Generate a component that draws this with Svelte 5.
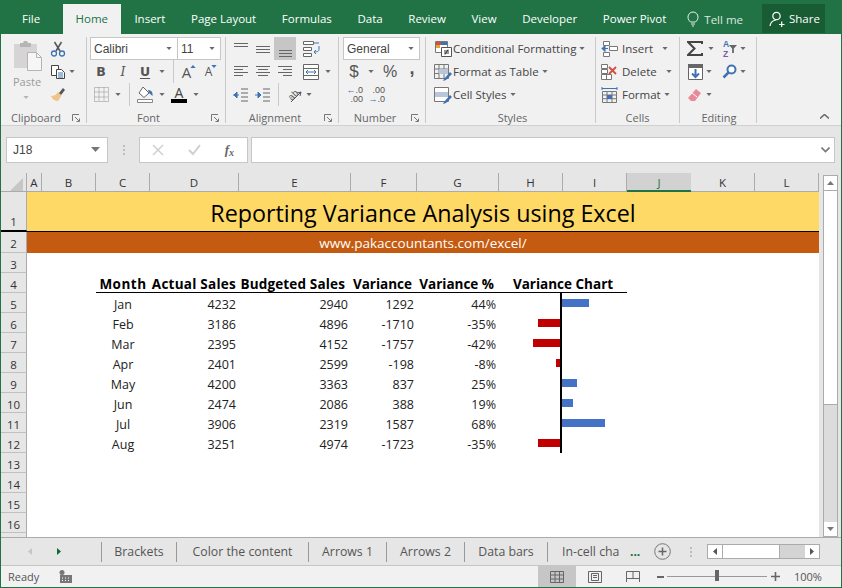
<script>
  const tabs = ['Insert', 'Page Layout', 'Formulas', 'Data', 'Review', 'View', 'Developer', 'Power Pivot'];
  const cols = ['A','B','C','D','E','F','G','H','I','J','K','L'];
  const data = [
    ['Jan','4232','2940','1292','44%',27],
    ['Feb','3186','4896','-1710','-35%',-22],
    ['Mar','2395','4152','-1757','-42%',-27],
    ['Apr','2401','2599','-198','-8%',-4],
    ['May','4200','3363','837','25%',15],
    ['Jun','2474','2086','388','19%',11],
    ['Jul','3906','2319','1587','68%',43],
    ['Aug','3251','4974','-1723','-35%',-22]
  ];
  const emptyAfter = [13,14,15,16];
  const sheetTabs = [['Brackets',75],['Color the content',132],['Arrows 1',78],['Arrows 2',78],['Data bars',83]];
</script>

{#snippet caret()}
  <svg class="caret" width="6" height="3" viewBox="0 0 7 4"><path d="M0 0h7L3.5 4z" fill="#6a6a6a"/></svg>
{/snippet}
{#snippet launcher()}
  <svg class="launch" width="8" height="8" viewBox="0 0 8 8"><path d="M.5 7V.5H7M3 3l4 4M4.5 7.5h3v-3" fill="none" stroke="#777"/></svg>
{/snippet}
{#snippet lines(ys)}
  <svg width="16" height="16" viewBox="0 0 16 16">
    {#each ys as l}<path d="M{l[0]} {l[2]}.5H{l[1]}" stroke="#666"/>{/each}
  </svg>
{/snippet}
{#snippet tableIcon(fill)}
  <svg width="20" height="18" viewBox="0 0 20 18">
    <path d="M1.5 1.5h14v14h-14zM1.5 6h14M1.5 10.500h14M6 1.500v14M11 1.500v14" fill="none" stroke="#777"/>
    <path d="M6 6h{fill}v5H6z" fill="#b9c6da"/>
    <path d="M11 16l6-7 2 2-6 6-3 1z" fill="#3f72b5"/>
  </svg>
{/snippet}

<div class="win">
  <header class="tabbar">
    <span class="tab file">File</span>
    <span class="tab home">Home</span>
    {#each tabs as t}<span class="tab">{t}</span>{/each}
    <span class="tell">
      <svg width="12" height="16" viewBox="0 0 12 16"><path d="M3.500 11C2 9.500 1 8.500 1 6a5 5 0 0 1 10 0c0 2.500-1 3.500-2.500 5zM4 13h4M5 15h2" fill="none" stroke="#e8f0ea" stroke-width="1"/></svg>
      Tell me
    </span>
    <span class="share">
      <svg width="16" height="16" viewBox="0 0 16 16"><circle cx="7.500" cy="5" r="3.700" fill="none" stroke="#fff" stroke-width="1.200"/><path d="M1 15c.5-3.500 2.500-5.500 6-6M10 13.500h5.500M12.700 10.500v6" fill="none" stroke="#fff" stroke-width="1.200"/></svg>
      Share
    </span>
  </header>

  <section class="ribbon">
    <div class="group g-clip">
      <div class="gbody clip">
        <div class="paste">
          <svg width="29" height="30" viewBox="0 0 29 30"><path d="M1 4a1 1 0 0 1 1-1h21a1 1 0 0 1 1 1v22a1 1 0 0 1-1 1H2a1 1 0 0 1-1-1z" fill="#d6d4d4"/><path d="M7 2h3l1-2h3l1 2h3v4H7z" fill="#b6b4b4"/><path d="M14.500 11.500h9l5 5v13h-14z" fill="#f6f6f6" stroke="#b5b3b3"/><path d="M23.500 11.500v5h5" fill="none" stroke="#b5b3b3"/></svg>
          <span class="pastelbl">Paste</span>
          <svg class="caret" width="6" height="3" viewBox="0 0 7 4"><path d="M0 0h7L3.500 4z" fill="#b5b5b5"/></svg>
        </div>
        <div class="clipcol">
          <div class="row"><span class="ib"><svg width="16" height="16" viewBox="0 0 16 16"><path d="M4.500 1l5.500 9M11.500 1L6 10" stroke="#555" stroke-width="1.500" fill="none"/><circle cx="4" cy="12.500" r="2.500" fill="none" stroke="#3f72b5" stroke-width="1.300"/><circle cx="12" cy="12.500" r="2.500" fill="none" stroke="#3f72b5" stroke-width="1.300"/></svg></span></div>
          <div class="row"><span class="ib"><svg width="16" height="16" viewBox="0 0 16 16"><path d="M1.500 1.500h7v10h-7z" fill="#fff" stroke="#444"/><path d="M6.500 5.500h5l3 3v6h-8z" fill="#fff" stroke="#444"/><path d="M8 9h5M8 11h5M8 13h5" stroke="#3f72b5"/></svg></span>{@render caret()}</div>
          <div class="row"><span class="ib"><svg width="16" height="16" viewBox="0 0 16 16"><path d="M8 5l3.500 3.500L8 14c-3 0-6-2-7-5 3 0 5-1 7-4z" fill="#eec488"/><path d="M9 6l4-5 2 2-4 5z" fill="#555"/></svg></span></div>
        </div>
      </div>
      <div class="glabel">Clipboard{@render launcher()}</div>
    </div>

    <div class="group g-font">
      <div class="gbody stack">
        <div class="row">
          <div class="combo fontname"><span>Calibri</span>{@render caret()}</div>
          <div class="combo fontsize"><span>11</span>{@render caret()}</div>
        </div>
        <div class="row">
          <span class="ib letter bold">B</span><span class="ib letter ital">I</span><span class="ib letter und">U</span><span class="cb">{@render caret()}</span>
          <i class="vsep"></i>
          <span class="ib growA big">A<svg width="6" height="3" viewBox="0 0 7 4"><path d="M0 4h7L3.500 0z" fill="#3f72b5"/></svg></span>
          <span class="ib growA small">A<svg width="6" height="3" viewBox="0 0 7 4"><path d="M0 0h7L3.500 4z" fill="#3f72b5"/></svg></span>
        </div>
        <div class="row">
          <span class="ib"><svg width="15" height="15" viewBox="0 0 15 15"><path d="M.5 .5h14v14H.5zM.5 5h14M.5 10h14M5 .5v14M10 .5v14" fill="none" stroke="#8f8f8f" stroke-dasharray="1 1"/></svg></span><span class="cb">{@render caret()}</span>
          <i class="vsep s2"></i>
          <span class="ib"><svg width="17" height="17" viewBox="0 0 17 17"><path d="M6 1l6 6-5 4.500L2 7z" fill="#fff" stroke="#666"/><path d="M11 4c3 0 5 2 4.500 6L12 7z" fill="#3f72b5"/><path d="M.5 13.500h15v3H.5z" fill="#fff" stroke="#888"/></svg></span><span class="cb">{@render caret()}</span>
          <span class="ib fontcolor">A<i></i></span><span class="cb">{@render caret()}</span>
        </div>
      </div>
      <div class="glabel">Font{@render launcher()}</div>
    </div>

    <div class="group g-align">
      <div class="gbody stack">
        <div class="row">
          <span class="ib">{@render lines([[1,15,2],[1,15,5]])}</span>
          <span class="ib">{@render lines([[1,15,5],[1,15,8],[1,15,11]])}</span>
          <span class="ib on">{@render lines([[2,15,9],[2,15,12],[2,15,15]])}</span>
          <span class="ib wrapb"><svg width="17" height="16" viewBox="0 0 17 16"><path d="M.5 .5h10v3H.5zM.5 6.500h8v3H.5zM.5 12.500h8v3H.5z" fill="#fff" stroke="#666"/><path d="M11 2h5M16 8c0 2-1 3-5 3M13 9l-2 2 2 2M16 5v3" fill="none" stroke="#3f72b5"/></svg></span>
        </div>
        <div class="row">
          <span class="ib">{@render lines([[1,15,2],[1,10,5],[1,15,8],[1,10,11]])}</span>
          <span class="ib">{@render lines([[1,15,2],[3,13,5],[1,15,8],[3,13,11]])}</span>
          <span class="ib">{@render lines([[1,15,2],[6,15,5],[1,15,8],[6,15,11]])}</span>
          <span class="ib wrapb"><svg width="16" height="16" viewBox="0 0 16 16"><path d="M.5 .5h15v15H.5zM.5 4.500h15M.5 11.500h15" fill="#fff" stroke="#666"/><path d="M3 8h10M3 8l2-2M3 8l2 2M13 8l-2-2M13 8l-2 2" stroke="#3f72b5" fill="none"/></svg></span><span class="cb">{@render caret()}</span>
        </div>
        <div class="row">
          <span class="ib"><svg width="16" height="16" viewBox="0 0 16 16"><path d="M8 2h7M8 6h7M8 10h7M8 14h7" stroke="#666"/><path d="M0 8h6M1 8l3-3v6z" stroke="#3f72b5" fill="#3f72b5"/></svg></span>
          <span class="ib"><svg width="16" height="16" viewBox="0 0 16 16"><path d="M8 2h7M8 6h7M8 10h7M8 14h7" stroke="#666"/><path d="M0 8h6M6 8L3 5v6z" stroke="#3f72b5" fill="#3f72b5"/></svg></span>
          <i class="vsep s3"></i>
          <span class="ib"><svg class="orient" width="18" height="18" viewBox="0 0 18 18"><text x="3" y="12" font-size="9" fill="#555" transform="rotate(-45 8 9)" font-family="Liberation Sans">ab</text><path d="M6 16L16 6M16 6l-4 1M16 6l-1 4" stroke="#555" fill="none"/></svg></span><span class="cb tight">{@render caret()}</span>
        </div>
      </div>
      <div class="glabel">Alignment{@render launcher()}</div>
    </div>

    <div class="group g-num">
      <div class="gbody stack">
        <div class="row"><div class="combo general"><span>General</span>{@render caret()}</div></div>
        <div class="row">
          <span class="ib numsym dollar">$</span><span class="cb">{@render caret()}</span>
          <span class="ib numsym pct">%</span><span class="ib numsym comma">,</span>
        </div>
        <div class="row">
          <span class="ib dec"><span><b>←</b>.0</span><span>.00</span></span>
          <span class="ib dec"><span>.00</span><span><b>→</b>.0</span></span>
        </div>
      </div>
      <div class="glabel">Number{@render launcher()}</div>
    </div>

    <div class="group g-styles">
      <div class="gbody stack">
        <div class="line"><span class="lic"><svg width="17" height="16" viewBox="0 0 17 16"><path d="M.5 .5h12v11H.5z" fill="#fff" stroke="#777"/><path d="M1 1h5v3H1z" fill="#d14f3f"/><path d="M6 1h6v3H6z" fill="#3f72b5"/><path d="M1 4h4v3H1z" fill="#e8a13c"/><path d="M6.500 6.500h10v9h-10z" fill="#fff" stroke="#555"/><path d="M9 10h5M9 12h5M13 8.500l-3 5" stroke="#333"/></svg></span>Conditional Formatting{@render caret()}</div>
        <div class="line"><span class="lic">{@render tableIcon(9)}</span>Format as Table{@render caret()}</div>
        <div class="line"><span class="lic"><svg width="20" height="18" viewBox="0 0 20 18"><path d="M1.500 1.500h14v14h-14z" fill="#fff" stroke="#777"/><path d="M2 6h13v5H2z" fill="#b9c6da"/><path d="M11 16l6-7 2 2-6 6-3 1z" fill="#3f72b5"/></svg></span>Cell Styles{@render caret()}</div>
      </div>
      <div class="glabel plain">Styles</div>
    </div>

    <div class="group g-cells">
      <div class="gbody stack">
        <div class="line c"><span class="lic"><svg width="17" height="16" viewBox="0 0 17 16"><path d="M2.500 .5h6v4h-6zM2.500 11.500h6v4h-6zM8.500 5.500h8v4h-8z" fill="#fff" stroke="#777"/><path d="M1 7.500h6M1 7.500l3-3v6z" stroke="#3f72b5" fill="#3f72b5"/></svg></span>Insert<span class="cgap g1">{@render caret()}</span></div>
        <div class="line c"><span class="lic"><svg width="17" height="16" viewBox="0 0 17 16"><path d="M.5 .5h6v4h-6zM.5 5.500h6v4h-6zM.5 10.500h10v5H.5zM5.500 10.500v5" fill="#fff" stroke="#777"/><path d="M8 3l7 7M15 3l-7 7" stroke="#d14f3f" stroke-width="1.800"/></svg></span>Delete<span class="cgap g2">{@render caret()}</span></div>
        <div class="line c"><span class="lic"><svg width="17" height="16" viewBox="0 0 17 16"><path d="M1.500 4.500h14v11h-14zM1.500 8h14M1.500 11.700h14M6 4.500v11M11 4.500v11" fill="none" stroke="#777"/><path d="M6 8h5v4H6z" fill="#3f72b5"/><path d="M1 1.500h15M1 0v3M16 0v3" stroke="#3f72b5"/></svg></span>Format<span class="cgap g3">{@render caret()}</span></div>
      </div>
      <div class="glabel plain">Cells</div>
    </div>

    <div class="group g-edit">
      <div class="gbody stack">
        <div class="line e">
          <span class="eic"><svg width="16" height="15" viewBox="0 0 16 15"><path d="M15 3V1H1l6.500 6.500L1 14h14v-2" fill="none" stroke="#444" stroke-width="2"/></svg></span>{@render caret()}
          <span class="eic e2"><span class="az"><b>A</b><em>Z</em></span><svg width="8" height="8" viewBox="0 0 9 9"><path d="M0 0h9L5.500 4v5h-2V4z" fill="#666"/></svg></span>{@render caret()}
        </div>
        <div class="line e">
          <span class="eic"><svg width="15" height="16" viewBox="0 0 15 16"><path d="M.5 .5h14v15H.5z" fill="#fff" stroke="#666"/><path d="M0 0h15v4H0z" fill="#666"/><path d="M7.500 5v8M4 9.500l3.500 3.500L11 9.500" fill="none" stroke="#3f72b5" stroke-width="2"/></svg></span><span class="e1c">{@render caret()}</span>
          <span class="eic e3"><svg width="15" height="15" viewBox="0 0 15 15"><circle cx="9.500" cy="5.500" r="4" fill="#fff" stroke="#3f72b5" stroke-width="2"/><path d="M6.500 8.500L1.500 13.500" stroke="#3f72b5" stroke-width="2.500"/></svg></span>{@render caret()}
        </div>
        <div class="line e">
          <span class="eic"><svg width="14" height="14" viewBox="0 0 14 14"><path d="M8 1l5 4-6 8H3l-3-3z" fill="#e88a9a"/><path d="M4 5l5 4" stroke="#fff"/></svg></span><span class="e1c">{@render caret()}</span>
        </div>
      </div>
      <div class="glabel plain">Editing</div>
    </div>
    <div class="collapse"><svg width="9" height="5" viewBox="0 0 9 5"><path d="M0 4.500L4.500 .5 9 4.500" fill="none" stroke="#666" stroke-width="1.500"/></svg></div>
  </section>

  <section class="fbar">
    <div class="namebox"><span>J18</span><svg width="9" height="5" viewBox="0 0 9 5"><path d="M0 0h9L4.500 5z" fill="#777"/></svg></div>
    <div class="fdots"><i></i><i></i><i></i></div>
    <div class="fxbox">
      <svg width="12" height="12" viewBox="0 0 12 12"><path d="M1 1l10 10M11 1L1 11" stroke="#cfcfcf" stroke-width="1.500"/></svg>
      <svg width="13" height="12" viewBox="0 0 13 12"><path d="M1 6l4 4 7-9" fill="none" stroke="#cfcfcf" stroke-width="2"/></svg>
      <span class="fx">f<sub>x</sub></span>
    </div>
    <div class="finput"><svg width="9" height="6" viewBox="0 0 9 6"><path d="M.5 .5L4.500 4.500 8.500 .5" fill="none" stroke="#777" stroke-width="1.600"/></svg></div>
  </section>

  <section class="work">
    <div class="sheet">
      <div class="hdr">
        <div class="corner"><svg width="13" height="13" viewBox="0 0 13 13"><path d="M13 0v13H0z" fill="#c6c6c6"/></svg></div>
        {#each cols as c}<div class="colh" class:sel={c === 'J'}>{c}</div>{/each}
      </div>

      <div class="gridrow r1"><div class="rowh">1</div><div class="title">Reporting Variance Analysis using Excel</div></div>
      <div class="gridrow r2"><div class="rowh">2</div><div class="url">www.pakaccountants.com/excel/</div></div>
      <div class="gridrow r"><div class="rowh">3</div></div>
      <div class="gridrow r">
        <div class="rowh">4</div>
        <div class="th ml c3 center">Month</div>
        <div class="th c4 pr3">Actual Sales</div>
        <div class="th c5 pr6">Budgeted Sales</div>
        <div class="th c6 pr5">Variance</div>
        <div class="th c7 pr5">Variance %</div>
        <div class="th c89 center">Variance Chart</div>
      </div>
      {#each data as d, i}
        <div class="gridrow r">
          <div class="rowh">{i + 5}</div>
          <div class="td ml c3 center">{d[0]}</div>
          <div class="td c4">{d[1]}</div>
          <div class="td c5">{d[2]}</div>
          <div class="td c6">{d[3]}</div>
          <div class="td c7">{d[4]}</div>
          <div class="chart c89">
            <div class="neg">{#if d[5] < 0}<i style="width:{-d[5]}px"></i>{/if}</div>
            <div class="axis"></div>
            <div class="pos">{#if d[5] > 0}<i style="width:{d[5]}px"></i>{/if}</div>
          </div>
        </div>
      {/each}
      {#each emptyAfter as n}<div class="gridrow r"><div class="rowh">{n}</div></div>{/each}
      <div class="gridrow stub"><div class="rowh"></div></div>
    </div>
    <div class="vscroll">
      <div class="vbtn"><svg width="7" height="4" viewBox="0 0 7 4"><path d="M0 4h7L3.500 0z" fill="#777"/></svg></div>
      <div class="vthumb"></div>
      <div class="vtrack"></div>
      <div class="vbtn last"><svg width="7" height="4" viewBox="0 0 7 4"><path d="M0 0h7L3.500 4z" fill="#777"/></svg></div>
    </div>
  </section>

  <section class="sheets">
    <div class="navs">
      <svg width="4" height="7" viewBox="0 0 4 7"><path d="M4 0v7L0 3.500z" fill="#c6c6c6"/></svg>
      <svg width="4" height="7" viewBox="0 0 4 7"><path d="M0 0v7L4 3.500z" fill="#0e6b35"/></svg>
    </div>
    {#each sheetTabs as t}<div class="stab" style="width:{t[1]}px">{t[0]}</div>{/each}
    <div class="stab last">In-cell cha</div>
    <span class="more">...</span>
    <svg class="plus" width="17" height="17" viewBox="0 0 17 17"><circle cx="8.500" cy="8.500" r="7.800" fill="none" stroke="#777"/><path d="M4.500 8.500h8M8.500 4.500v8" stroke="#666" stroke-width="1.500"/></svg>
    <div class="fdots h"><i></i><i></i><i></i></div>
    <div class="hscroll">
      <div class="hbtn"><svg width="4" height="7" viewBox="0 0 4 7"><path d="M4 0v7L0 3.500z" fill="#555"/></svg></div>
      <div class="hthumb"></div>
      <div class="htrack"></div>
      <div class="hbtn"><svg width="4" height="7" viewBox="0 0 4 7"><path d="M0 0v7L4 3.500z" fill="#555"/></svg></div>
    </div>
  </section>

  <footer class="status">
    <span class="ready">Ready</span>
    <svg class="macro" width="13" height="13" viewBox="0 0 13 13"><circle cx="3" cy="2.500" r="2.500" fill="#777"/><path d="M1 5h12v8H1z" fill="#777"/><path d="M3 8h1M6 8h1M9 8h1M3 10.500h1M6 10.500h1M9 10.500h1" stroke="#fff"/></svg>
    <div class="views">
      <span class="vw on"><svg width="14" height="12" viewBox="0 0 14 12"><path d="M.5 .5h13v11H.5zM.5 4h13M.5 8h13M5 .5v11M9.500 .5v11" fill="none" stroke="#666"/></svg></span>
      <span class="vw"><svg width="14" height="12" viewBox="0 0 14 12"><path d="M.5 .5h13v11H.5z" fill="none" stroke="#666"/><path d="M3.500 2.500h7v7h-7zM5 4.500h4M5 6.500h4" fill="none" stroke="#666"/></svg></span>
      <span class="vw"><svg width="14" height="12" viewBox="0 0 14 12"><path d="M.5 11V.5h13V11M.5 7.500h13M7 .5v7" fill="none" stroke="#666"/></svg></span>
    </div>
    <div class="zoom">
      <i class="zm"></i>
      <div class="zline"><i></i></div>
      <svg width="9" height="9" viewBox="0 0 9 9"><path d="M0 4.500h9M4.500 0v9" stroke="#666" stroke-width="1.600"/></svg>
    </div>
    <span class="pct100">100%</span>
  </footer>
</div>

<style>
  :global(body) { margin: 0; }
  .win {
    width: 842px; height: 588px; box-sizing: border-box;
    border: 1px solid #217346;
    background: #f1f1f1; display: flex; flex-direction: column; overflow: hidden;
    font-family: "Open Sans", sans-serif; font-size: 12px; color: #444;
  }
  svg { display: block; flex: none; }
  .orient { overflow: visible; }
  i { display: block; }

  .tabbar { height: 33px; background: #217346; color: #fff; display: flex; align-items: flex-end; flex: none; box-sizing: border-box; font-size: 11.5px; }
  .tab { height: 30px; line-height: 29px; margin-left: 25.600px; white-space: nowrap; }
  .file { margin-left: 21px; margin-right: -3px; }
  .home { background: #f1f1f1; color: #217346; width: 58px; text-align: center; margin-right: -12px; }
  .tell { display: flex; align-items: center; gap: 5px; height: 30px; margin-left: 21px; color: #dce9e1; white-space: nowrap; }
  .share { display: flex; align-items: center; gap: 4px; width: 63px; height: 29px; margin: 0 16px 1px auto; padding-left: 7px; box-sizing: border-box; background: #185c33; }

  .ribbon { height: 92px; flex: none; display: flex; align-items: flex-start; border-bottom: 1px solid #d0d0d0; position: relative; box-sizing: border-box; }
  .group { height: 86px; margin-top: 3px; border-right: 1px solid #c9c9c9; display: flex; flex-direction: column; box-sizing: border-box; }
  .gbody { height: 73px; flex: none; }
  .stack { display: flex; flex-direction: column; }
  .row { display: flex; align-items: center; height: 23px; }
  .glabel { position: relative; flex: 1; text-align: center; font-size: 11px; color: #666; line-height: 16px; padding-right: 18px; }
  .g-clip .glabel { padding-right: 15px; }
  .glabel.plain { padding-right: 3px; }
  .launch { position: absolute; right: 6px; top: 4px; }

  .g-clip { width: 86px; }
  .g-font { width: 139px; padding-left: 3px; }
  .g-align { width: 113px; padding-left: 4px; }
  .g-num { width: 87px; padding-left: 4px; }
  .g-styles { width: 170px; padding-left: 7px; }
  .g-cells { width: 84px; padding-left: 3px; }
  .g-edit { width: 77px; padding-left: 5px; }

  .clip { display: flex; }
  .paste { width: 46px; padding-left: 12px; box-sizing: border-box; display: flex; flex-direction: column; align-items: flex-start; padding-top: 4px; }
  .pastelbl { color: #9a9a9a; font-size: 11px; margin: 4px 0 0 0; line-height: 14px; }
  .paste .caret { margin: 7px 0 0 10px; }
  .clipcol { display: flex; flex-direction: column; }

  .ib { width: 22px; height: 23px; display: flex; align-items: center; justify-content: center; flex: none; box-sizing: border-box; }
  .ib.on { background: #c6c6c6; }
  .cb { width: 12px; display: flex; justify-content: center; flex: none; }
  .cb.tight { width: 8px; }
  .vsep { width: 1px; height: 23px; background: #c9c9c9; margin: 0 4px 0 5px; flex: none; }
  .vsep.s3 { margin: 0 4px; }
  .combo { height: 23px; background: #fff; border: 1px solid #c6c6c6; box-sizing: border-box; display: flex; align-items: center; justify-content: space-between; padding: 0 5px 0 3px; font-family: "Liberation Sans", sans-serif; font-size: 12px; color: #444; }
  .fontname { width: 88px; }
  .fontsize { width: 43px; border-left: 0; }
  .general { width: 77px; }
  .letter { font-family: "DejaVu Sans", sans-serif; font-size: 12.500px; color: #555; }
  .bold { font-weight: 700; }
  .ital { font-style: italic; font-family: "DejaVu Serif", serif; }
  .und { text-decoration: underline; text-underline-offset: 2px; font-weight: 700; }
  .growA { font-family: "Open Sans", sans-serif; color: #555; gap: 0; align-items: center; }
  .growA svg { margin: -10px 0 0 -1px; }
  .big { font-size: 15px; }
  .small { font-size: 12px; }
  .fontcolor { flex-direction: column; font-size: 14px; color: #444; line-height: 13px; }
  .fontcolor i { width: 16px; height: 4px; background: #000; }
  .wrapb { margin-left: 4px; }
  .numsym { font-family: "Liberation Sans", sans-serif; color: #555; }
  .dollar { font-size: 17px; }
  .pct { font-size: 16px; margin-left: 2px; }
  .comma { font-size: 18px; font-weight: 700; margin-top: -6px; }
  .dec { flex-direction: column; font-family: "Liberation Sans", sans-serif; font-size: 9px; line-height: 9px; color: #555; align-items: flex-end; padding-right: 2px; }
  .dec b { color: #3f72b5; font-weight: 700; }

  .line { height: 23px; display: flex; align-items: center; gap: 3px; font-size: 11.500px; white-space: nowrap; }
  .lic { width: 20px; display: flex; justify-content: center; flex: none; margin-right: -3px; }
  .line.c .lic { margin-right: 0; }
  .cgap { display: block; }
  .g1 { margin-left: 6px; }
  .g2 { margin-left: 6px; }
  .g3 { margin-left: 0; }
  .line.e { gap: 3px; }
  .eic { width: 20px; display: flex; justify-content: center; align-items: center; flex: none; }
  .e1c { display: block; margin-left: -2px; }
  .e2 { margin: 0 -2px 0 4px; width: 18px; }
  .e3 { margin: 0 -2px 0 4px; }
  .az { display: flex; flex-direction: column; font-size: 8.500px; line-height: 10px; font-family: "Liberation Sans", sans-serif; }
  .az b { color: #3f72b5; }
  .az em { color: #7e57a8; font-style: normal; font-weight: 700; }
  .collapse { position: absolute; right: 12px; bottom: 6px; }

  .fbar { height: 47px; flex: none; background: #e6e6e6; display: flex; align-items: center; box-sizing: border-box; padding: 0 6px 0 5px; }
  .namebox { width: 102px; height: 26px; background: #fff; border: 1px solid #c6c6c6; box-sizing: border-box; display: flex; align-items: center; justify-content: space-between; padding: 0 7px 0 6px; font-family: "Liberation Sans", sans-serif; font-size: 12px; }
  .fdots { width: 31px; display: flex; flex-direction: column; align-items: center; gap: 2px; flex: none; }
  .fdots i { width: 2px; height: 2px; background: #bdbdbd; }
  .fxbox { width: 109px; height: 26px; background: #fff; border: 1px solid #c6c6c6; box-sizing: border-box; display: flex; align-items: center; padding: 0 13px 0 12px; justify-content: space-between; }
  .fx { font-family: "Liberation Serif", serif; font-style: italic; font-weight: 700; font-size: 13px; color: #666; line-height: 12px; }
  .fx sub { font-size: 10px; vertical-align: -2px; line-height: 0; }
  .finput { flex: 1; height: 26px; margin-left: 3px; background: #fff; border: 1px solid #c6c6c6; box-sizing: border-box; display: flex; align-items: center; justify-content: flex-end; padding-right: 4px; }

  .work { height: 364px; flex: none; display: flex; background: #e6e6e6; }
  .sheet { width: 818px; flex: none; display: flex; flex-direction: column; font-family: "Open Sans", sans-serif; font-size: 12.500px; color: #111; }
  .hdr { height: 18px; flex: none; display: grid; grid-template-columns: 26px 15px 54px 54px 89px 112px 66px 82px 64px 64px 64px 64px 64px; border-bottom: 1px solid #ababab; box-sizing: content-box; background: #e6e6e6; }
  .corner { display: flex; justify-content: flex-end; align-items: flex-end; padding: 0 3px 2px 0; border-right: 1px solid #ababab; }
  .colh { border-right: 1px solid #ababab; text-align: center; font-size: 11.500px; color: #333; box-sizing: border-box; line-height: 20px; }
  .colh.sel { background: #d2d2d2; height: 19px; border-bottom: 2px solid #217346; border-right: 0; color: #217346; }

  .gridrow { display: flex; background: #fff; flex: none; }
  .rowh { width: 25px; flex: none; background: #e6e6e6; border-right: 1px solid #ababab; border-bottom: 1px solid #c0c0c0; box-sizing: content-box; text-align: center; color: #333; font-size: 11.500px; height: 19px; line-height: 23px; }
  .r { height: 20px; }
  .r1 { height: 40px; background: #ffd966; border-bottom: 1px solid #000; box-sizing: border-box; }
  .r1 .rowh { height: 38px; line-height: 60px; border-bottom-color: #000; }
  .r2 { height: 21px; }
  .r2 .rowh { height: 20px; }
  .stub { height: 4px; }
  .stub .rowh { height: 4px; border-bottom: 0; }
  .title { flex: 1; text-align: center; font-size: 23.300px; line-height: 42px; color: #000; }
  .url { flex: 1; background: #c55a11; color: #fff; text-align: center; font-size: 13.500px; line-height: 23px; }

  .th, .td { flex: none; text-align: right; line-height: 20px; box-sizing: border-box; white-space: nowrap; padding-top: 2px; height: 20px; }
  .th { font-weight: 700; font-size: 13.500px; border-bottom: 1px solid #000; color: #000; padding-top: 1px; }
  .th.c3 { letter-spacing: .5px; }
  .th.c4 { letter-spacing: .25px; }
  .th.c5 { letter-spacing: .15px; }
  .td { padding-right: 3px; color: #222; }
  .center { text-align: center; padding-right: 0; }
  .ml { margin-left: 69px; }
  .c3 { width: 54px; }
  .c4 { width: 89px; }
  .c5 { width: 112px; }
  .c6 { width: 66px; }
  .c7 { width: 82px; }
  .c89 { width: 128px; }
  .pr3 { padding-right: 3px; }
  .pr6 { padding-right: 6px; }
  .pr5 { padding-right: 5px; }
  .chart { display: flex; }
  .neg { width: 61px; display: flex; justify-content: flex-end; align-items: center; flex: none; }
  .pos { flex: 1; display: flex; align-items: center; }
  .neg i { height: 8px; background: #c00000; }
  .pos i { height: 8px; background: #4472c4; }
  .axis { width: 2px; background: #000; flex: none; }

  .vscroll { width: 15px; margin: 2px 0 0 4px; border: 1px solid #ababab; box-sizing: border-box; height: 362px; display: flex; flex-direction: column; background: #dcdcdc; }
  .vbtn { height: 14px; background: #fff; flex: none; display: flex; align-items: center; justify-content: center; }
  .vthumb { height: 215px; background: #fff; border-top: 1px solid #ababab; border-bottom: 1px solid #ababab; box-sizing: border-box; flex: none; }
  .vtrack { flex: 1; }

  .sheets { height: 28px; flex: none; background: #e6e6e6; border-top: 1px solid #ababab; box-sizing: border-box; display: flex; align-items: center; }
  .navs { width: 100px; padding-left: 27px; box-sizing: border-box; display: flex; gap: 25px; flex: none; }
  .stab { height: 20px; border-left: 1px solid #999; text-align: center; line-height: 19px; font-size: 12.300px; color: #555; flex: none; box-sizing: border-box; white-space: nowrap; }
  .stab.last { text-align: left; padding-left: 14px; width: 83px; overflow: hidden; }
  .more { color: #0e6b35; font-weight: 700; width: 22px; line-height: 14px; flex: none; }
  .plus { margin-left: 2px; }
  .fdots.h { width: 40px; }
  .hscroll { margin-left: -4px; width: 113px; height: 15px; border: 1px solid #ababab; box-sizing: border-box; display: flex; background: #d4d4d4; flex: none; }
  .hbtn { width: 14px; background: #fff; display: flex; align-items: center; justify-content: center; flex: none; }
  .hthumb { width: 58px; background: #fff; border-left: 1px solid #ababab; border-right: 1px solid #ababab; box-sizing: border-box; flex: none; }
  .htrack { flex: 1; }

  .status { flex: 1; background: #f1f1f1; display: flex; align-items: center; font-size: 11px; color: #555; border-top: 1px solid #c6c6c6; box-sizing: border-box; }
  .ready { margin-left: 7px; width: 51px; }
  .views { display: flex; margin-left: 466px; align-self: stretch; }
  .vw { width: 38px; display: flex; align-items: center; justify-content: center; }
  .vw.on { background: #c6c6c6; }
  .zoom { display: flex; align-items: center; margin-left: 5px; gap: 3px; }
  .zm { width: 7px; height: 2px; background: #666; }
  .zline { width: 100px; height: 1px; background: #999; position: relative; margin-right: 1px; }
  .zline i { position: absolute; left: 48px; top: -6px; width: 4px; height: 11px; background: #666; }
  .pct100 { margin-left: 14px; }
</style>
